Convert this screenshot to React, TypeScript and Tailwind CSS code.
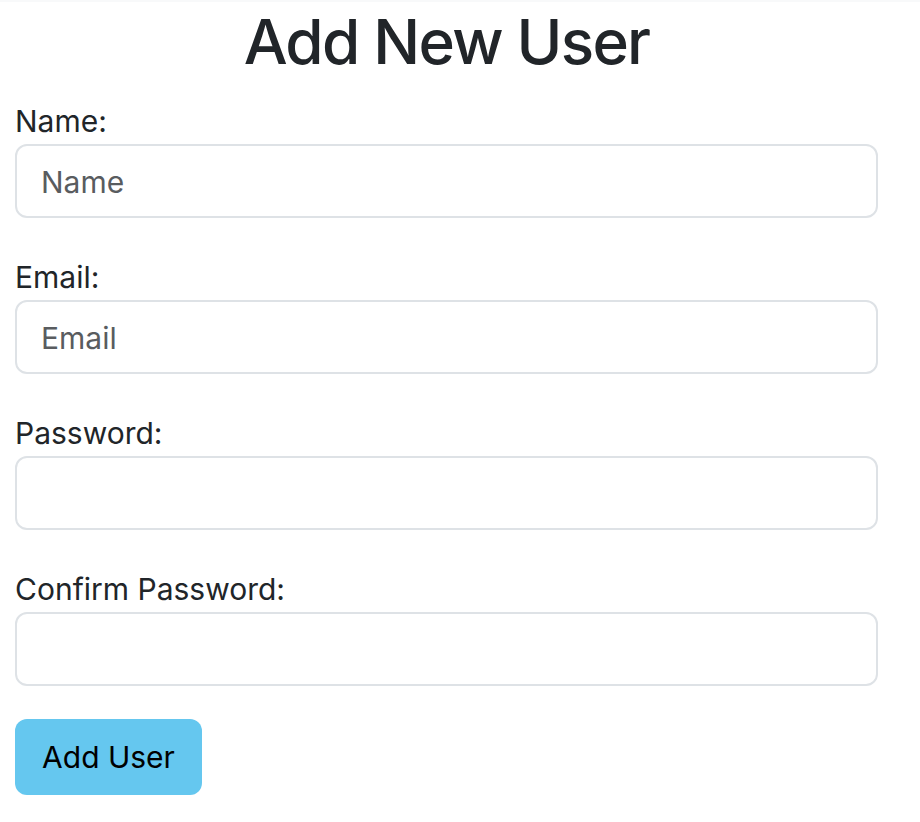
export default function App() {
  const fields = [
    { label: "Name:", placeholder: "Name", type: "text" },
    { label: "Email:", placeholder: "Email", type: "email" },
    { label: "Password:", placeholder: "", type: "password" },
    { label: "Confirm Password:", placeholder: "", type: "password" },
  ];

  return (
    <div className="min-h-screen bg-white font-['Inter',sans-serif] text-[#212529]">
      <div className="h-[2px] bg-[#f8f9fa]" />
      <div className="ml-[15px] w-[863px]">
        <h1 className="mt-[2px] text-center text-[62px] leading-[76px] font-medium tracking-[-0.028em]">Add New User</h1>
        <form className="mt-[21px] flex flex-col gap-[39px]" onSubmit={(e) => e.preventDefault()}>
          {fields.map((f) => (
            <div key={f.label} className="flex flex-col gap-[3px]">
              <label className="text-[30px] leading-[40px]">{f.label}</label>
              <input
                type={f.type}
                placeholder={f.placeholder}
                className="h-[74px] w-full rounded-[12px] border-2 border-[#dee2e6] bg-white px-[24px] pt-[2px] text-[30px] text-[#212529] outline-none placeholder:text-[#595c5f]"
              />
            </div>
          ))}
        </form>
        <button
          type="submit"
          className="mt-[33px] h-[76px] w-[187px] rounded-[12px] bg-[#65c7ef] pt-[1px] text-[30px] text-black"
        >
          Add User
        </button>
      </div>
    </div>
  );
}
